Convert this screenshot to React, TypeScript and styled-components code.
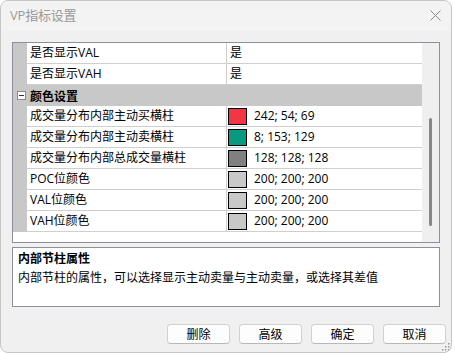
import React from "react";
import styled, { createGlobalStyle } from "styled-components";

const GlobalStyle = createGlobalStyle`
  html, body {
    margin: 0;
    padding: 0;
    background: #ffffff;
  }
  body {
    font-family: "Open Sans", "Noto Sans CJK SC", sans-serif;
    font-size: 12px;
    color: #000;
  }
`;

type Row =
  | { kind: "text"; name: string; value: string }
  | { kind: "color"; name: string; rgb: [number, number, number] }
  | { kind: "category"; name: string };

const rows: Row[] = [
  { kind: "text", name: "是否显示VAL", value: "是" },
  { kind: "text", name: "是否显示VAH", value: "是" },
  { kind: "category", name: "颜色设置" },
  { kind: "color", name: "成交量分布内部主动买横柱", rgb: [242, 54, 69] },
  { kind: "color", name: "成交量分布内部主动卖横柱", rgb: [8, 153, 129] },
  { kind: "color", name: "成交量分布内部总成交量横柱", rgb: [128, 128, 128] },
  { kind: "color", name: "POC位颜色", rgb: [200, 200, 200] },
  { kind: "color", name: "VAL位颜色", rgb: [200, 200, 200] },
  { kind: "color", name: "VAH位颜色", rgb: [200, 200, 200] },
];

export default function App() {
  return (
    <>
      <GlobalStyle />
      <Window>
        <TitleBar>
          <Title>VP指标设置</Title>
          <CloseButton>
            <svg width="11" height="11" viewBox="0 0 11 11">
              <path d="M0.5 0.5 L10.5 10.5 M10.5 0.5 L0.5 10.5" stroke="#8a8a8a" strokeWidth="1" />
            </svg>
          </CloseButton>
        </TitleBar>
        <Body>
          <Grid>
            <GridRows>
              {rows.map((row, i) => {
                if (row.kind === "category") {
                  return (
                    <CategoryRow key={i}>
                      <Toggle>
                        <svg width="9" height="9" viewBox="0 0 9 9">
                          <rect x="0.5" y="0.5" width="8" height="8" fill="#fff" stroke="#8a8a8a" />
                          <path d="M2 4.5 H7" stroke="#333" />
                        </svg>
                      </Toggle>
                      <CategoryName>{row.name}</CategoryName>
                    </CategoryRow>
                  );
                }
                return (
                  <PropRow key={i}>
                    <Gutter />
                    <NameCell>{row.name}</NameCell>
                    <ValueCell>
                      {row.kind === "color" ? (
                        <>
                          <Swatch $color={`rgb(${row.rgb.join(",")})`} />
                          <ColorText>{row.rgb.join("; ")}</ColorText>
                        </>
                      ) : (
                        row.value
                      )}
                    </ValueCell>
                  </PropRow>
                );
              })}
            </GridRows>
            <ScrollTrack>
              <ScrollThumb />
            </ScrollTrack>
          </Grid>
          <Description>
            <DescTitle>内部节柱属性</DescTitle>
            <DescText>内部节柱的属性，可以选择显示主动卖量与主动卖量，或选择其差值</DescText>
          </Description>
          <Buttons>
            <Button>删除</Button>
            <Button>高级</Button>
            <Button>确定</Button>
            <Button>取消</Button>
          </Buttons>
          <Grip>
            <svg width="9" height="9" viewBox="0 0 9 9">
              {[
                [7, 1],
                [7, 4],
                [4, 4],
                [7, 7],
                [4, 7],
                [1, 7],
              ].map(([x, y], i) => (
                <rect key={i} x={x} y={y} width="1.5" height="1.5" fill="#9a9a9a" />
              ))}
            </svg>
          </Grip>
        </Body>
      </Window>
    </>
  );
}

const Window = styled.div`
  position: relative;
  width: 452px;
  height: 353px;
  box-sizing: border-box;
  border: 1px solid #c6c6c6;
  border-radius: 8px;
  background: #f0f0f0;
  overflow: hidden;
  display: flex;
  flex-direction: column;
`;

const TitleBar = styled.div`
  height: 30px;
  box-sizing: border-box;
  padding: 0 10px 3px 9px;
  background: #f3f3f3;
  display: flex;
  align-items: center;
  justify-content: space-between;
  flex-shrink: 0;
`;

const Title = styled.div`
  font-size: 13px;
  color: #9a9a9a;
  letter-spacing: -0.2px;
`;

const CloseButton = styled.div`
  width: 11px;
  height: 11px;
  display: flex;
  margin-top: 2px;
`;

const Body = styled.div`
  flex: 1;
  display: flex;
  flex-direction: column;
  padding: 11px 11px 0 11px;
`;

const Grid = styled.div`
  height: 201px;
  box-sizing: border-box;
  border: 1px solid #8e8e98;
  background: #ffffff;
  display: flex;
`;

const GridRows = styled.div`
  flex: 1;
  display: flex;
  flex-direction: column;
`;

const PropRow = styled.div`
  display: flex;
  height: 21px;
`;

const Gutter = styled.div`
  width: 14px;
  background: #c8c8c8;
  flex-shrink: 0;
`;

const NameCell = styled.div`
  width: 200px;
  box-sizing: border-box;
  padding-left: 3px;
  line-height: 20px;
  border-right: 1px solid #cfcfcf;
  border-bottom: 1px solid #cfcfcf;
  white-space: nowrap;
`;

const ValueCell = styled.div`
  flex: 1;
  box-sizing: border-box;
  padding-left: 3px;
  line-height: 20px;
  border-bottom: 1px solid #cfcfcf;
  display: flex;
  align-items: center;
`;

const Swatch = styled.div<{ $color: string }>`
  width: 19px;
  height: 17px;
  box-sizing: border-box;
  border: 1px solid #000;
  background: ${(p) => p.$color};
  margin-left: -2px;
  flex-shrink: 0;
`;

const ColorText = styled.span`
  margin-left: 7px;
`;

const CategoryRow = styled.div`
  height: 21px;
  background: #c8c8c8;
  display: flex;
  align-items: center;
`;

const Toggle = styled.div`
  width: 17px;
  display: flex;
  justify-content: center;
`;

const CategoryName = styled.div`
  font-weight: bold;
`;

const ScrollTrack = styled.div`
  width: 17px;
  background: #efefef;
  position: relative;
  flex-shrink: 0;
`;

const ScrollThumb = styled.div`
  position: absolute;
  left: 7px;
  top: 75px;
  width: 3px;
  height: 108px;
  border-radius: 2px;
  background: #878787;
`;

const Description = styled.div`
  margin-top: 4px;
  height: 60px;
  box-sizing: border-box;
  border: 1px solid #8e8e98;
  background: #ffffff;
  padding: 2px 5px;
`;

const DescTitle = styled.div`
  font-weight: bold;
  line-height: 18px;
`;

const DescText = styled.div`
  line-height: 20px;
`;

const Buttons = styled.div`
  display: flex;
  justify-content: flex-end;
  gap: 9px;
  margin-top: 17px;
  margin-right: -6px;
`;

const Button = styled.div`
  width: 63px;
  height: 20px;
  box-sizing: border-box;
  border: 1px solid #d0d0d0;
  border-bottom-color: #b8b8b8;
  border-radius: 4px;
  background: #fdfdfd;
  display: flex;
  align-items: center;
  justify-content: center;
  font-size: 12px;
`;

const Grip = styled.div`
  position: absolute;
  right: 1px;
  bottom: 1px;
  width: 9px;
  height: 9px;
  display: flex;
`;
